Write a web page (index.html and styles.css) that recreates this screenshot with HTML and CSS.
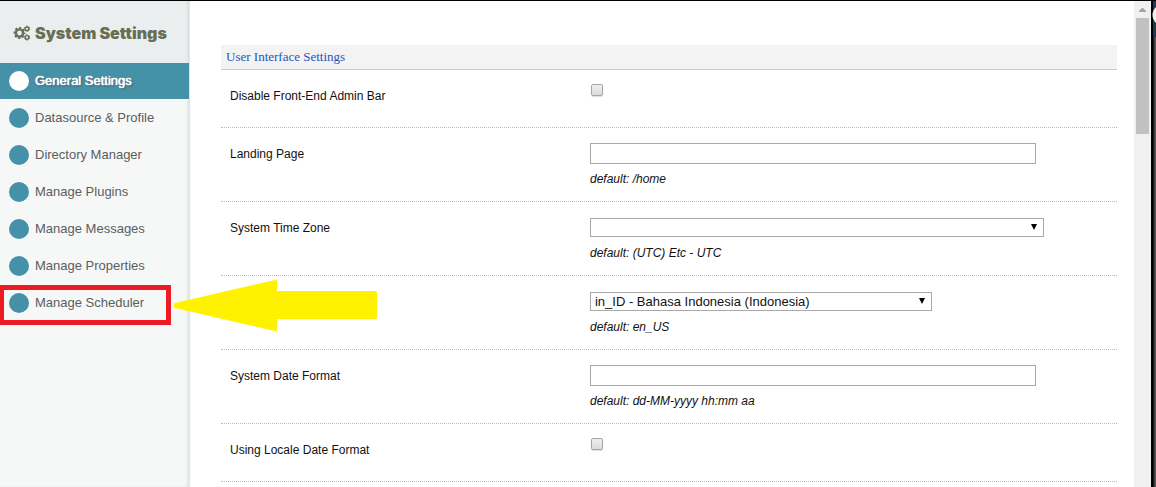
FILE: index.html
```html
<!DOCTYPE html>
<html lang="en">
<head>
<meta charset="utf-8">
<title>System Settings</title>
<link rel="stylesheet" href="styles.css">
</head>
<body>
<div class="window">
  <aside class="sidebar">
    <h1 class="brand">
      <svg class="cogs" viewBox="0 0 18 16" aria-hidden="true">
        <g fill="none" stroke="currentColor">
          <circle cx="6.5" cy="8" r="3.6" stroke-width="2.4"/>
          <circle cx="6.5" cy="8" r="5.2" stroke-width="1.6" stroke-dasharray="2.3 1.784" stroke-dashoffset="1.15"/>
          <circle cx="14" cy="3.8" r="1.8" stroke-width="1.4"/>
          <circle cx="14" cy="3.8" r="2.7" stroke-width="1" stroke-dasharray="1.6 1.227"/>
          <circle cx="14" cy="12.4" r="1.8" stroke-width="1.4"/>
          <circle cx="14" cy="12.4" r="2.7" stroke-width="1" stroke-dasharray="1.6 1.227"/>
        </g>
      </svg>
      <span>System Settings</span>
    </h1>
    <nav class="menu">
      <a class="item active" href="#general">General Settings</a>
      <a class="item" href="#datasource">Datasource &amp; Profile</a>
      <a class="item" href="#directory">Directory Manager</a>
      <a class="item" href="#plugins">Manage Plugins</a>
      <a class="item" href="#messages">Manage Messages</a>
      <a class="item" href="#properties">Manage Properties</a>
      <a class="item marked" href="#scheduler">Manage Scheduler
        <svg class="arrow" viewBox="0 0 205 53" aria-hidden="true"><path fill="#fff200" d="M2 24 102 1Q104 0 104 2V12H203L204 13V39L203 40H104V51Q104 53 102 52L2 29Q-1 26 2 24Z"/></svg>
      </a>
    </nav>
  </aside>
  <main class="content">
    <form class="panel">
      <h2 class="legend">User Interface Settings</h2>
      <div class="row"><label for="bar">Disable Front-End Admin Bar</label><div class="field"><input class="check" id="bar" type="checkbox"></div></div>
      <div class="row tall"><label for="landing">Landing Page</label><div class="field"><input class="text" id="landing" type="text"><em>default: /home</em></div></div>
      <div class="row tall"><label for="zone">System Time Zone</label><div class="field"><span class="drop zone"><select id="zone"><option></option></select></span><em>default: (UTC) Etc - UTC</em></div></div>
      <div class="row tall"><span></span><div class="field"><span class="drop locale"><select aria-label="Locale"><option>in_ID - Bahasa Indonesia (Indonesia)</option></select></span><em>default: en_US</em></div></div>
      <div class="row tall"><label for="date">System Date Format</label><div class="field"><input class="text" id="date" type="text"><em>default: dd-MM-yyyy hh:mm aa</em></div></div>
      <div class="row"><label for="using">Using Locale Date Format</label><div class="field"><input class="check" id="using" type="checkbox"></div></div>
    </form>
  </main>
  <div class="scrollbar"><svg class="up" viewBox="0 0 7 4" aria-hidden="true"><path fill="#a3a3a3" d="M3 0h1l3 3v1H0V3Z"/></svg><div class="thumb"></div></div>
  <div class="edge"><div class="corner"></div></div>
</div>
</body>
</html>
```
FILE: styles.css
```css
* { box-sizing: border-box; }
body { margin: 0; font: 12px/16px "Liberation Sans", Arial, sans-serif; color: #111; background: #fff; }
.window { display: flex; height: 100vh; overflow: hidden; border-top: 1px solid #000; }

.sidebar { flex: 0 0 190px; background: #f6f8f8; border-right: 1px solid #e3e4e4; box-shadow: inset -2px 0 2px #e3e6e6; }
.brand { display: flex; align-items: center; gap: 4px; height: 62px; margin: 0; padding: 2px 0 0 13px; background: #ebeeef; color: #686e55; font: 900 16px/20px Inter, sans-serif; white-space: nowrap; box-shadow: inset -2px 0 2px #dde0e1; }
.cogs { width: 18px; height: 16px; }
.menu { display: flex; flex-direction: column; gap: 1px; }
.item { display: flex; align-items: center; gap: 6px; height: 36px; padding-left: 9px; color: #5b5d5d; font-size: 13px; text-decoration: none; }
.item::before { content: ""; width: 20px; height: 20px; border-radius: 50%; background: #4591a8; }
.active { background: #4591a8; color: #fff; text-shadow: 0 0 1px #fff, 0 0 1px #fff, 1px 1px 2px #444; }
.active::before { background: #fff; }
.marked { position: relative; }
.marked::after { content: ""; position: absolute; inset: 0 18px -4px 0; border: 5px solid #ed1c24; border-left-width: 4px; }
.arrow { position: absolute; z-index: 1; left: 173px; top: -6px; width: 205px; height: 53px; }

.content { flex: 1; min-width: 0; padding: 44px 17px 0 31px; }
.legend { margin: 0; padding: 4px 5px; background: #f3f3f3; border-bottom: 1px solid #ccc; color: #1f55c4; font: 13px/16px "Liberation Serif", serif; }
.row { display: grid; grid-template-columns: 41% 59%; min-height: 58px; padding: 14px 9px 0; border-bottom: 1px dotted #bbb; }
.tall { min-height: 74px; }
.row label { padding-top: 4px; }
.field { display: flex; flex-direction: column; align-items: flex-start; }
.field em { margin-top: auto; padding-bottom: 14px; }
.text { width: 100%; max-width: 446px; height: 21px; margin: 1px 0 0; padding: 1px 4px; border: 1px solid #a9a9a9; font: inherit; }
.check { appearance: none; width: 12px; height: 12px; margin: 0 0 0 1px; border: 1px solid #a6a6a6; border-radius: 2px; background: linear-gradient(#eee, #dcdcdc); box-shadow: 0 1px 1px #ddd; }
.drop { position: relative; display: block; width: 100%; margin-top: 2px; }
.zone { max-width: 454px; }
.locale { max-width: 342px; }
.drop select { display: block; appearance: none; width: 100%; height: 19px; padding: 0 20px 0 4px; border: 1px solid #a9a9a9; border-radius: 0; background: #fff; color: #111; font: 13px/16px "Liberation Sans", Arial, sans-serif; }
.drop::after { content: ""; position: absolute; right: 7px; top: 6px; border: 3px solid transparent; border-top: 6px solid #000; border-bottom: 0; }

.scrollbar { flex: 0 0 17px; display: flex; flex-direction: column; align-items: center; gap: 6px; padding-top: 7px; background: #f0f0f0; }
.up { width: 7px; height: 4px; }
.thumb { width: 13px; height: 116px; background: #c1c1c1; }
.edge { flex: 0 0 5px; background: linear-gradient(90deg, #000 2px, #333 3px, #666 5px); }
.corner { height: 36px; background: radial-gradient(circle at 12px 14px, #eee 10px, transparent 11px), linear-gradient(90deg, #000 2px, #173f4b 2px); }
```
